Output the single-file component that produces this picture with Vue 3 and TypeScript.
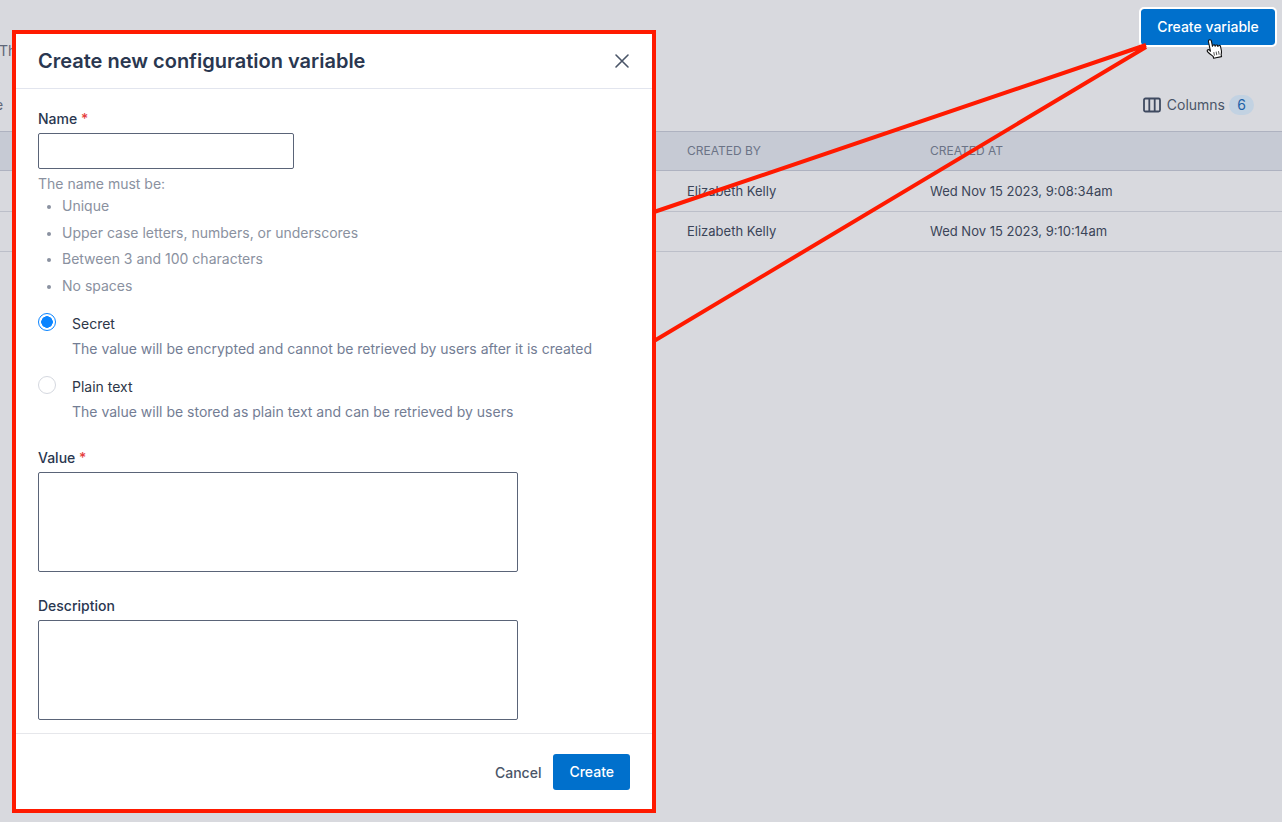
<script setup lang="ts">
const rows = [
  { by: 'Elizabeth Kelly', at: 'Wed Nov 15 2023, 9:08:34am' },
  { by: 'Elizabeth Kelly', at: 'Wed Nov 15 2023, 9:10:14am' },
]
const rules = ['Unique', 'Upper case letters, numbers, or underscores', 'Between 3 and 100 characters', 'No spaces']
</script>

<template>
  <div class="page">
    <div class="topbar">
      <p class="intro">The</p>
      <button class="primary outlined" type="button">Create variable</button>
    </div>
    <div class="toolbar">
      <span class="clipped">e</span>
      <div class="columns">
        <svg class="col-icon" width="18" height="16" viewBox="0 0 18 16" fill="none" stroke="#3f4a60" stroke-width="1.8">
          <rect x="1" y="1.5" width="16" height="13" rx="1.5" />
          <path d="M6.3 1.5v13M11.7 1.5v13" />
        </svg>
        <span class="col-label">Columns</span>
        <span class="badge">6</span>
      </div>
    </div>
    <div class="table">
      <div class="row head">
        <span class="by">CREATED BY</span>
        <span>CREATED AT</span>
      </div>
      <div v-for="r in rows" :key="r.at" class="row body">
        <span class="by">{{ r.by }}</span>
        <span>{{ r.at }}</span>
      </div>
    </div>

    <section class="modal">
      <header class="modal-head">
        <h2>Create new configuration variable</h2>
        <svg class="close" width="16" height="16" viewBox="0 0 16 16" fill="none" stroke="#4a5568" stroke-width="1.6" stroke-linecap="round">
          <path d="M2 2l12 12M14 2L2 14" />
        </svg>
      </header>
      <div class="modal-body">
        <label class="label">Name <em>*</em></label>
        <div class="input name"></div>
        <p class="hint">The name must be:</p>
        <ul class="rules">
          <li v-for="r in rules" :key="r">{{ r }}</li>
        </ul>
        <div class="radio first">
          <span class="dot checked"></span>
          <div>
            <div class="radio-title">Secret</div>
            <div class="radio-desc">The value will be encrypted and cannot be retrieved by users after it is created</div>
          </div>
        </div>
        <div class="radio second">
          <span class="dot"></span>
          <div>
            <div class="radio-title">Plain text</div>
            <div class="radio-desc">The value will be stored as plain text and can be retrieved by users</div>
          </div>
        </div>
        <label class="label value">Value <em>*</em></label>
        <div class="input area"></div>
        <label class="label desc">Description</label>
        <div class="input area"></div>
      </div>
      <footer class="modal-foot">
        <span class="cancel">Cancel</span>
        <button class="primary" type="button">Create</button>
      </footer>
    </section>

    <svg class="annotation" width="1282" height="822" viewBox="0 0 1282 822" fill="none">
      <path d="M654 212L1146 45M654 341L1146 47" stroke="#ff1a00" stroke-width="4" />
    </svg>

    <svg class="cursor" width="18" height="21" viewBox="0 0 18 21">
      <path d="M5 12.5V2.6c0-2 3-2 3 0V8c0-1.4 2.6-1.4 2.6 0v.6c0-1.3 2.6-1.3 2.6 0v.8c0-1.2 2.6-1.2 2.6.3v4.3c0 1.8-.6 2.6-1.1 4V20H6.6v-1.8c-1-1.3-2.3-2.7-4.4-5.6-1.2-1.8 1-3 2.1-1.5z" fill="#fff" stroke="#111" stroke-width="1.1" stroke-linejoin="round" />
      <path d="M8 14v3.5M10.4 14v3.5M12.8 14v3.5" stroke="#555" stroke-width="1" />
    </svg>
  </div>
</template>

<style>
html, body { margin: 0; }
</style>

<style scoped>
.page {
  position: relative;
  width: 1282px;
  height: 822px;
  overflow: hidden;
  background: #d8d9de;
  font-family: Inter, "Liberation Sans", sans-serif;
  font-size: 14px;
  color: #2d3748;
}
.topbar {
  height: 85px;
  display: flex;
  justify-content: space-between;
  align-items: flex-start;
  box-sizing: border-box;
  padding: 9px 7px 0 0;
}
.intro { margin: 33px 0 0 -1px; color: #5e6778; font-size: 14px; }
.primary {
  border: 0;
  border-radius: 3px;
  background: #0070cc;
  color: #fff;
  font: 500 14px Inter, "Liberation Sans", sans-serif;
  height: 36px;
  padding: 0 16px 1px;
}
.outlined {
  width: 134px;
  padding: 0 0 1px;
  outline: 2px solid #fff;
}
.toolbar {
  height: 46px;
  display: flex;
  justify-content: space-between;
  align-items: flex-start;
  padding-right: 28px;
}
.clipped { margin: 11px 0 0 -5px; font-size: 14px; color: #5e6778; }
.columns {
  display: flex;
  align-items: center;
  gap: 5px;
  height: 20px;
  margin-top: 10px;
  color: #4a5568;
}
.col-icon { margin-right: 1px; }
.col-label { padding-bottom: 1px; }
.badge {
  background: #c2d2e2;
  color: #1f62a8;
  border-radius: 10px;
  width: 25px;
  height: 20px;
  line-height: 20px;
  text-align: center;
  margin-left: -1px;
}
.row {
  display: flex;
  align-items: center;
  padding-left: 687px;
  box-sizing: border-box;
  border-bottom: 1px solid #bcbfc9;
}
.by { width: 243px; }
.head {
  height: 40px;
  padding-bottom: 2px;
  background: #c6cad4;
  border-top: 1px solid #aeb2c0;
  border-bottom-color: #aeb2c0;
  color: #6b7386;
  font-size: 12px;
}
.body { height: 40.5px; font-size: 13px; color: #3a4458; }

.modal {
  position: absolute;
  left: 12px;
  top: 30px;
  width: 644px;
  height: 783px;
  box-sizing: border-box;
  border: 4px solid #ff1a00;
  background: #fff;
  display: flex;
  flex-direction: column;
}
.modal-head {
  height: 55px;
  flex: none;
  box-sizing: border-box;
  display: flex;
  align-items: center;
  justify-content: space-between;
  padding: 0 22px;
  border-bottom: 1px solid #e2e5ee;
}
.modal-head h2 {
  margin: 0;
  font-size: 20px;
  font-weight: 600;
  color: #2a3750;
}
.modal-body { flex: 1; padding: 21px 22px 0; }
.label { display: block; font-size: 14px; font-weight: 500; line-height: 18px; color: #2a3750; }
.label em { font-style: normal; color: #e53e3e; }
.input {
  box-sizing: border-box;
  border: 1px solid #5a6478;
  border-radius: 2px;
  background: #fff;
  margin-top: 5px;
}
.name { width: 256px; height: 36px; }
.area { width: 480px; height: 100px; }
.hint { margin: 6px 0 1px; font-size: 14px; line-height: 17px; color: #8a91a0; }
.rules { margin: 0; padding: 0 0 0 24px; font-size: 14px; line-height: 26.5px; color: #8a91a0; }
.rules li::marker { font-size: 12px; }
.radio { display: flex; gap: 16px; }
.first { margin-top: 14px; }
.second { margin-top: 19px; }
.dot {
  width: 18px;
  height: 18px;
  box-sizing: border-box;
  border-radius: 50%;
  border: 1px solid #d5d8df;
  background: #fff;
  flex: none;
}
.dot.checked {
  border: 1.5px solid #0a84ff;
  background: radial-gradient(circle, #0a84ff 0 5.5px, #fff 6px);
}
.radio-title { margin-top: 2px; font-size: 14px; line-height: 18px; color: #2d3748; }
.radio-desc { margin-top: 7px; font-size: 14px; line-height: 17px; color: #737d94; }
.value { margin-top: 29px; }
.desc { margin-top: 25px; }
.modal-foot {
  height: 76px;
  flex: none;
  box-sizing: border-box;
  display: flex;
  align-items: center;
  justify-content: flex-end;
  gap: 12px;
  padding: 1px 22px 0;
  border-top: 1px solid #e6e7eb;
}
.cancel { font-size: 14px; font-weight: 500; color: #4a5568; }
.annotation { position: absolute; left: 0; top: 0; pointer-events: none; }
.cursor { position: absolute; left: 1205px; top: 38px; transform: rotate(-12deg); }
</style>
